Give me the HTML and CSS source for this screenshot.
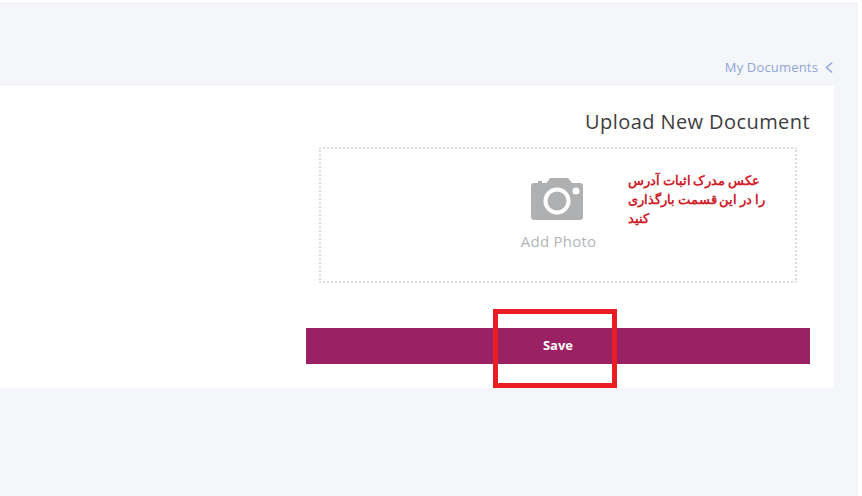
FILE: index.html
```html
<!DOCTYPE html>
<html lang="en">
<head>
<meta charset="utf-8">
<title>Upload New Document</title>
<link rel="stylesheet" href="styles.css">
</head>
<body>
<div class="page">
  <div class="crumb-row">
    <a class="crumb">My Documents</a>
    <svg class="chev" width="8" height="13" viewBox="0 0 8 13"><path d="M7.200 1.500 L1.500 6.500 L7.200 11.500" fill="none" stroke="#8fa6d6" stroke-width="1.500"/></svg>
  </div>
  <main class="card">
    <section class="form">
      <h1 class="title">Upload New Document</h1>
      <div class="drop">
        <div class="photo">
          <svg class="cam" width="52" height="42" viewBox="0 0 52 42">
            <path fill="#aeb0b2" d="M7 3h4v3H7z"/>
            <path fill="#aeb0b2" d="M3 5h10l3-0.500L19 0h18l4 5h8a3 3 0 0 1 3 3v31a3 3 0 0 1-3 3H3a3 3 0 0 1-3-3V8a3 3 0 0 1 3-3z"/>
            <circle cx="26" cy="23" r="13.500" fill="#fff"/>
            <circle cx="26" cy="23" r="9.500" fill="#aeb0b2"/>
            <circle cx="45" cy="13" r="3.500" fill="#fff"/>
          </svg>
          <span class="add">Add Photo</span>
        </div>
        <div class="note">
          <p class="line" dir="rtl">عکس مدرک اثبات آدرس</p>
          <p class="line" dir="rtl">را در این قسمت بارگذاری</p>
          <p class="line" dir="rtl">کنید</p>
        </div>
      </div>
      <div class="save-wrap">
        <button class="save">Save</button>
        <span class="mark"></span>
      </div>
    </section>
  </main>
</div>
</body>
</html>
```
FILE: styles.css
```css
* { box-sizing: border-box; }
html, body { margin: 0; height: 100%; background: #fff; }
.page {
  width: 858px;
  height: 494px;
  margin-top: 2px;
  background: #f4f6f9;
  font-family: "Open Sans", "Liberation Sans", sans-serif;
  overflow: hidden;
}
.crumb-row {
  height: 84px;
  padding: 56px 25px 0 0;
  display: flex;
  justify-content: flex-end;
  align-items: flex-start;
  gap: 7px;
}
.crumb { font-size: 13px; line-height: 18px; letter-spacing: 0.17px; color: #8fa6d6; }
.chev { margin-top: 3px; }
.card {
  width: 834px;
  height: 302px;
  background: #fff;
  display: flex;
  justify-content: flex-end;
  padding-right: 24px;
}
.form { width: 504px; display: flex; flex-direction: column; }
.title {
  margin: 22px 0 0;
  font-size: 20px;
  line-height: 28px;
  font-weight: 500;
  letter-spacing: 0.42px;
  color: #3d3d3d;
  text-align: right;
}
.drop {
  width: 478px;
  height: 136px;
  margin: 11px 0 0 13px;
  border: 2px dotted #dcdcdc;
  border-radius: 2px;
  display: flex;
  position: relative;
}
.photo {
  width: 476px;
  padding-top: 29px;
  display: flex;
  flex-direction: column;
  align-items: center;
}
.cam { display: block; margin-right: 2px; }
.add { margin: 11px 0 0 1px; font-size: 15px; line-height: 20px; letter-spacing: 0.24px; color: #b3b5b7; }
.note {
  position: absolute;
  left: 307px;
  top: 23px;
  width: 138px;
  font-family: "Liberation Sans", sans-serif;
  font-size: 12.6px;
  font-weight: 700;
  line-height: 19px;
  word-spacing: -0.8px;
  color: #cf2027;
}
.line { margin: 0; text-align: left; white-space: nowrap; }
.save-wrap { position: relative; margin-top: 45px; }
.save {
  display: block;
  width: 504px;
  height: 36px;
  padding: 0 0 2px;
  border: 0;
  background: #9a2163;
  color: #fff;
  font-family: "Open Sans", "Liberation Sans", sans-serif;
  font-size: 13px;
  font-weight: 700;
  text-align: center;
}
.mark {
  position: absolute;
  left: 187px;
  top: -19px;
  width: 124px;
  height: 79px;
  border: 5px solid #ea1c24;
}
```
